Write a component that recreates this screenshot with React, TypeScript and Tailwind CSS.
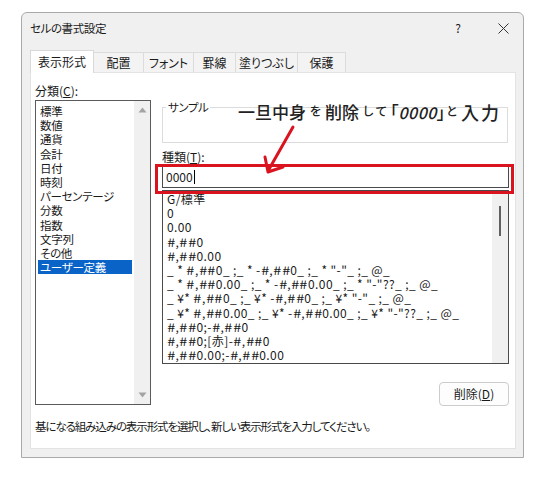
import React from "react"

const jp = "font-['Noto_Sans_CJK_JP','Noto_Sans',sans-serif] [font-feature-settings:'palt']"

const categories = [
  "標準",
  "数値",
  "通貨",
  "会計",
  "日付",
  "時刻",
  "パーセンテージ",
  "分数",
  "指数",
  "文字列",
  "その他",
  "ユーザー定義",
]

const formats = [
  "G/標準",
  "0",
  "0.00",
  "#,##0",
  "#,##0.00",
  '_ * #,##0_ ;_ * -#,##0_ ;_ * "-"_ ;_ @_',
  '_ * #,##0.00_ ;_ * -#,##0.00_ ;_ * "-"??_ ;_ @_',
  '_ ¥* #,##0_ ;_ ¥* -#,##0_ ;_ ¥* "-"_ ;_ @_',
  '_ ¥* #,##0.00_ ;_ ¥* -#,##0.00_ ;_ ¥* "-"??_ ;_ @_',
  "#,##0;-#,##0",
  "#,##0;[赤]-#,##0",
  "#,##0.00;-#,##0.00",
]

const tabs = [
  { label: "表示形式", w: "w-[64px]" },
  { label: "配置", w: "w-[50px]" },
  { label: "フォント", w: "w-[50px]" },
  { label: "罫線", w: "w-[42px]" },
  { label: "塗りつぶし", w: "w-[62px]" },
  { label: "保護", w: "w-[48px]" },
]

function Triangle({ up }: { up?: boolean }) {
  return (
    <svg width="9" height="6" viewBox="0 0 9 6">
      <path d={up ? "M0.5 5.5 L4.5 0.5 L8.5 5.5 Z" : "M0.5 0.5 L4.5 5.5 L8.5 0.5 Z"} fill="#a3a3a3" />
    </svg>
  )
}

// '#' は元の画面だと幅が広い字形なので横に伸ばす
function FormatText({ text }: { text: string }) {
  const parts = text.split("#")
  return (
    <>
      {parts.map((p, i) => (
        <React.Fragment key={i}>
          {p}
          {i < parts.length - 1 && (
            <span className="inline-block w-[8.6px] text-center tracking-normal scale-x-[1.2]">#</span>
          )}
        </React.Fragment>
      ))}
    </>
  )
}

export default function App() {
  return (
    <div className={`relative w-[542px] h-[477px] bg-white overflow-hidden pt-[12px] pl-[21px] text-[#1a1a1a] ${jp}`}>
      {/* ダイアログ本体 */}
      <div className="w-[503px] h-[446px] border border-[#aaaaaa] rounded-t-[6px] bg-[#f0f0f0] flex flex-col">
        {/* タイトルバー */}
        <div className="h-[30px] flex items-center pl-[8px] pr-[14px]">
          <span className="text-[11.5px] leading-[14px] tracking-[-0.4px]">セルの書式設定</span>
          <span className="ml-auto text-[12px] leading-[14px] mr-[37px]">?</span>
          <svg width="11" height="11" viewBox="0 0 11 11">
            <path d="M0.5 0.5 L10.5 10.5 M10.5 0.5 L0.5 10.5" stroke="#333" strokeWidth="1" />
          </svg>
        </div>

        {/* タブ */}
        <div className="h-[29px] flex items-end pl-[8px]">
          {tabs.map((t, i) =>
            i === 0 ? (
              <div
                key={t.label}
                className={`${t.w} h-[23px] bg-white border border-b-0 border-[#d9d9d9] flex items-center justify-center text-[12px] leading-[14px] relative z-10 -mb-[1px]`}
              >
                {t.label}
              </div>
            ) : (
              <div
                key={t.label}
                className={`${t.w} h-[20px] bg-[#f3f3f3] border-t border-r border-[#dcdcdc] flex items-center justify-center text-[12px] leading-[14px]`}
              >
                {t.label}
              </div>
            ),
          )}
        </div>

        {/* タブの中身 */}
        <div className="ml-[8px] w-[486px] h-[377px] bg-white border border-[#e3e3e3] pl-[4px] pt-[11px]">
          <div className="flex items-start">
            {/* 分類 */}
            <div className="w-[116px]">
              <div className="text-[12px] leading-[14px]">
                分類(<span className="underline">C</span>):
              </div>
              <div className="mt-[2px] h-[305px] border border-[#5a5a5a] flex">
                <div className="flex-1 px-[2px] pt-[3px]">
                  {categories.map((c) => (
                    <div
                      key={c}
                      className={`h-[14.2px] leading-[14.2px] text-[11.5px] tracking-[-0.3px] pl-[2px] ${
                        c === "ユーザー定義" ? "bg-[#0a64c8] text-white" : ""
                      }`}
                    >
                      {c}
                    </div>
                  ))}
                </div>
                <div className="w-[16px] bg-[#f0f0f0] flex flex-col items-center justify-between pt-[6px] pb-[6px]">
                  <Triangle up />
                  <Triangle />
                </div>
              </div>
            </div>

            {/* 右側 */}
            <div className="ml-[11px] w-[347px] pt-[16px]">
              <fieldset className="h-[43px] border border-[#dcdcdc] pl-[2px] mr-[1px]">
                <legend className="px-[2px] ml-[1px] text-[11.5px] leading-[14px] tracking-[-0.4px]">サンプル</legend>
              </fieldset>
              <div className="mt-[7px] text-[12px] leading-[14px]">
                種類(<span className="underline">T</span>):
              </div>
              <div className="mt-[2px] h-[22px] border border-[#4a4a4a] flex items-center pl-[3px] text-[12px]">
                <span>0000</span>
                <span className="w-[1px] h-[14px] bg-black ml-[1px]" />
              </div>
              <div className="mt-[2px] h-[174px] border border-[#4a4a4a] flex overflow-hidden">
                <div className="flex-1 pt-[1px] pl-[4px] overflow-hidden">
                  {formats.map((f) => (
                    <div key={f} className="h-[14.2px] leading-[14.2px] text-[12px] tracking-[0.4px] whitespace-pre">
                      <FormatText text={f} />
                    </div>
                  ))}
                </div>
                <div className="w-[16px] bg-[#f0f0f0] pt-[15px] flex justify-center">
                  <div className="w-[2px] h-[30px] bg-[#606060]" />
                </div>
              </div>
              <div className="mt-[18px] flex justify-end">
                <button className="w-[70px] h-[24px] border border-[#cccccc] rounded-[4px] bg-[#fdfdfd] text-[12px] leading-[14px]">
                  削除(<span className="underline">D</span>)
                </button>
              </div>
            </div>
          </div>

          <div className="mt-[13px] text-[11.5px] leading-[14px] tracking-[-1.1px]">
            基になる組み込みの表示形式を選択し、新しい表示形式を入力してください。
          </div>
        </div>
      </div>

      {/* 注釈：赤枠 */}
      <div className="absolute left-[155px] top-[164px] w-[359px] h-[30px] border-[3px] border-[#d9141e]" />

      {/* 注釈：テキスト */}
      <div className="absolute left-[238px] top-[101px] flex items-end text-[#222] font-medium leading-[20px]">
        <span className="text-[17px]">一旦中身</span>
        <span className="text-[12px] mx-[4px] mb-[1px]">を</span>
        <span className="text-[17px]">削除</span>
        <span className="text-[12px] ml-[4px] mb-[1px] tracking-[3px]">して</span>
        <span className="text-[17px]">「</span>
        <span className="text-[16px] italic tracking-[0.5px]">0000</span>
        <span className="text-[17px]">」</span>
        <span className="text-[12px] ml-[1px] mr-[4px] mb-[1px]">と</span>
        <span className="text-[18px] tracking-[2px]">入力</span>
      </div>

      {/* 注釈：矢印 */}
      <svg className="absolute left-[255px] top-[120px]" width="45" height="60" viewBox="0 0 45 60">
        <path
          d="M38 7 L13 51 M13 52 L10 37 M13 52 L28 47"
          stroke="#d9141e"
          strokeWidth="3"
          strokeLinecap="round"
          strokeLinejoin="round"
          fill="none"
        />
      </svg>
    </div>
  )
}
